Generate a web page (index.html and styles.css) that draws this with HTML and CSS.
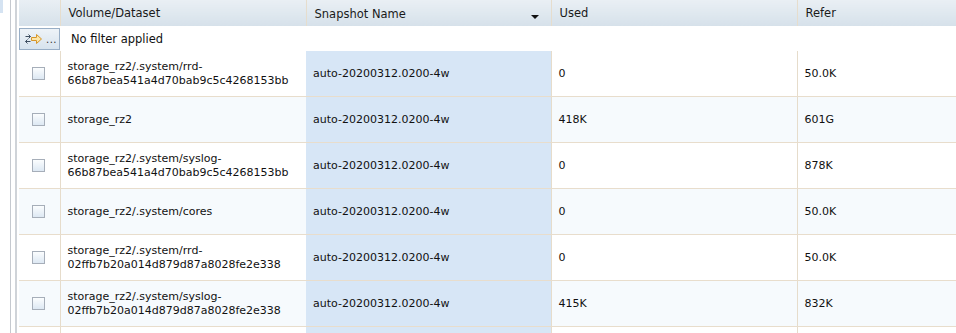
FILE: index.html
```html
<!DOCTYPE html>
<html>
<head>
<meta charset="utf-8">
<link rel="stylesheet" href="styles.css">
</head>
<body>
<div class="page">
  <div class="side">
    <div class="side-tab"></div>
    <div class="side-line"></div>
    <div class="side-line second"></div>
  </div>
  <table class="grid">
    <colgroup>
      <col class="c-check">
      <col class="c-vol">
      <col class="c-snap">
      <col class="c-used">
      <col class="c-refer">
    </colgroup>
    <thead>
      <tr class="head">
        <th></th>
        <th>Volume/Dataset</th>
        <th class="sorted"><span>Snapshot Name</span><span class="arrow"></span></th>
        <th>Used</th>
        <th>Refer</th>
      </tr>
      <tr class="filter">
        <td class="fcell">
          <button class="fbtn">
            <svg width="22" height="12" viewBox="0 0 22 12">
              <path d="M1.5 3.5h5M4.5 1.5l2 2-2 2" fill="none" stroke="#3e4e60" stroke-width="1"/>
              <path d="M6.5 8.5h-5M3.5 6.5l-2 2 2 2" fill="none" stroke="#3e4e60" stroke-width="1"/>
              <path d="M7.5 4.5h5v-3l5 4.5-5 4.5v-3h-5z" fill="#fde6a8" stroke="#d6962a" stroke-width="1"/>
            </svg><span class="dots">...</span>
          </button>
        </td>
        <td colspan="4" class="ftext">No filter applied</td>
      </tr>
    </thead>
    <tbody>
      <tr>
        <td class="ck"><span class="box"></span></td>
        <td>storage_rz2/.system/rrd-<br>66b87bea541a4d70bab9c5c4268153bb</td>
        <td class="snap">auto-20200312.0200-4w</td>
        <td>0</td>
        <td>50.0K</td>
      </tr>
      <tr class="alt">
        <td class="ck"><span class="box"></span></td>
        <td>storage_rz2</td>
        <td class="snap">auto-20200312.0200-4w</td>
        <td>418K</td>
        <td>601G</td>
      </tr>
      <tr>
        <td class="ck"><span class="box"></span></td>
        <td>storage_rz2/.system/syslog-<br>66b87bea541a4d70bab9c5c4268153bb</td>
        <td class="snap">auto-20200312.0200-4w</td>
        <td>0</td>
        <td>878K</td>
      </tr>
      <tr class="alt">
        <td class="ck"><span class="box"></span></td>
        <td>storage_rz2/.system/cores</td>
        <td class="snap">auto-20200312.0200-4w</td>
        <td>0</td>
        <td>50.0K</td>
      </tr>
      <tr>
        <td class="ck"><span class="box"></span></td>
        <td>storage_rz2/.system/rrd-<br>02ffb7b20a014d879d87a8028fe2e338</td>
        <td class="snap">auto-20200312.0200-4w</td>
        <td>0</td>
        <td>50.0K</td>
      </tr>
      <tr class="alt">
        <td class="ck"><span class="box"></span></td>
        <td>storage_rz2/.system/syslog-<br>02ffb7b20a014d879d87a8028fe2e338</td>
        <td class="snap">auto-20200312.0200-4w</td>
        <td>415K</td>
        <td>832K</td>
      </tr>
      <tr>
        <td class="ck"><span class="box"></span></td>
        <td></td>
        <td class="snap"></td>
        <td></td>
        <td></td>
      </tr>
    </tbody>
  </table>
</div>
</body>
</html>
```

FILE: styles.css
```css
html, body {
  margin: 0;
  padding: 0;
  background: #fff;
  overflow: hidden;
}
.page {
  display: flex;
  width: 1000px;
  height: 333px;
  font-family: "DejaVu Sans", sans-serif;
  font-size: 11px;
  color: #111;
}
.side {
  width: 19px;
  flex: none;
  display: flex;
}
.side-tab {
  width: 3px;
  height: 13px;
  background: #d5e3f2;
}
.side-line {
  width: 1px;
  margin-left: 7px;
  background: #c5c9cf;
}
.side-line.second {
  width: 2px;
  margin-left: 4px;
  background: #cfd3d8;
}
.grid {
  border-collapse: collapse;
  table-layout: fixed;
  width: 937px;
  flex: none;
}
.c-check { width: 41px; }
.c-vol { width: 246px; }
.c-snap { width: 245px; }
.c-used { width: 246px; }
.c-refer { width: 159px; }

.head th {
  height: 26px;
  padding: 0 0 0 8px;
  text-align: left;
  font-weight: normal;
  font-size: 11.5px;
  color: #1a1a1a;
  background: linear-gradient(#e9eff4, #d6e1ea);
  border-left: 1px solid #e6ddcd;
  white-space: nowrap;
}
.head th:first-child { border-left: none; }
.head th.sorted span:first-child { vertical-align: middle; }
.arrow {
  float: right;
  margin: 9px 12px 0 0;
  width: 0;
  height: 0;
  border-left: 4px solid transparent;
  border-right: 4px solid transparent;
  border-top: 4px solid #111;
}
.filter td {
  height: 25px;
  padding: 0;
  background: #fff;
}
.fcell {
  padding: 0;
  vertical-align: middle;
}
.fbtn {
  display: flex;
  align-items: center;
  width: 41px;
  height: 22px;
  margin: 1px 0 0 0;
  padding: 0 0 0 4px;
  border: 1px solid #98aec6;
  background: linear-gradient(#eef3f8, #d7e3ee);
  font: inherit;
  cursor: pointer;
}
.fbtn svg { flex: none; }
.dots {
  font-size: 10px;
  color: #333;
  margin-left: 0;
  letter-spacing: 0.5px;
}
.ftext {
  padding-left: 11px !important;
  font-size: 11.5px;
}
tbody td {
  height: 45px;
  padding: 0 0 0 7px;
  line-height: 14px;
  border-left: 1px solid #e6dccb;
  border-bottom: 1px solid #e8ddcc;
  vertical-align: middle;
  white-space: nowrap;
  overflow: hidden;
}
tbody td:first-child { border-left: none; }
tbody tr.alt td { background: #f6fafd; }
tbody td.snap,
tbody tr.alt td.snap {
  background: #d7e6f6;
  border-left: none;
}
tbody td.ck {
  padding: 0;
  text-align: center;
}
.box {
  display: inline-block;
  width: 11px;
  height: 11px;
  margin-left: -1px;
  vertical-align: middle;
  border: 1px solid #a6aeb9;
  background: linear-gradient(#fbfdfe, #dde8f3);
}
```
